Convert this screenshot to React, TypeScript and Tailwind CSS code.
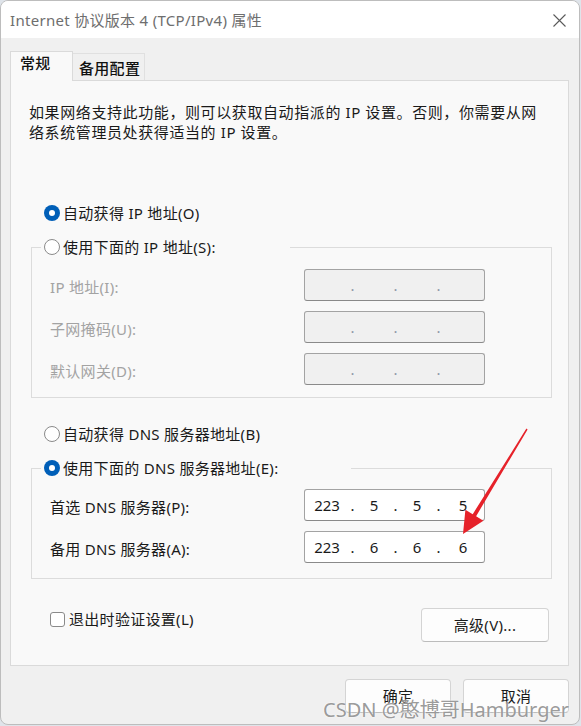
import React from "react";

const fontStack = "font-['Noto_Sans','Noto_Sans_CJK_SC',sans-serif]";

function Radio({ checked }: { checked?: boolean }) {
  if (checked) {
    return (
      <span className="flex h-[16px] w-[16px] shrink-0 items-center justify-center rounded-full bg-[#005fb8]">
        <span className="h-[6px] w-[6px] rounded-full bg-white" />
      </span>
    );
  }
  return (
    <span className="h-[16px] w-[16px] shrink-0 rounded-full border border-[#8a8a8a] bg-white" />
  );
}

function RadioRow({ label, checked }: { label: string; checked?: boolean }) {
  return (
    <div className="flex h-[20px] items-center gap-[3px] leading-[20px]">
      <Radio checked={checked} />
      <span className="whitespace-nowrap">{label}</span>
    </div>
  );
}

function IpBox({ parts, disabled }: { parts: string[]; disabled?: boolean }) {
  const dot = disabled ? "text-[#8f98a8]" : "text-[#1a1a1a]";
  return (
    <div
      className={[
        "flex h-[32px] w-[181px] items-center rounded-[3px] border border-[#a3a3a3] border-b-[#8a8a8a] text-[15px] leading-[20px] tracking-normal",
        disabled ? "bg-[#f0f0f0]" : "bg-white",
      ].join(" ")}
    >
      <span className="w-[44px] text-center">{parts[0]}</span>
      <span className={`w-[7px] text-center ${dot}`}>.</span>
      <span className="w-[36px] text-center">{parts[1]}</span>
      <span className={`w-[7px] text-center ${dot}`}>.</span>
      <span className="w-[36px] text-center">{parts[2]}</span>
      <span className={`w-[7px] text-center ${dot}`}>.</span>
      <span className="w-[42px] text-center">{parts[3]}</span>
    </div>
  );
}

function FieldRow({
  label,
  parts,
  disabled,
}: {
  label: string;
  parts: string[];
  disabled?: boolean;
}) {
  return (
    <div className="flex h-[32px] items-center">
      <span
        className={[
          "w-[254px] pt-[3px] leading-[20px]",
          disabled ? "text-[#a3a3a3]" : "text-[#1a1a1a]",
        ].join(" ")}
      >
        {label}
      </span>
      <IpBox parts={parts} disabled={disabled} />
    </div>
  );
}

function DialogButton({ label, width }: { label: string; width: string }) {
  return (
    <button
      className={`${width} flex h-[34px] items-center justify-center rounded-[4px] border border-[#d4d4d4] border-b-[#bcbcbc] bg-[#fdfdfd] text-[15px] leading-[20px] text-[#1a1a1a]`}
    >
      {label}
    </button>
  );
}

export default function App() {
  return (
    <div className={`relative h-[726px] w-[581px] overflow-hidden bg-[#dfe4ea] ${fontStack} text-[15px] tracking-[0.3px] text-[#1a1a1a]`}>
      <div className="relative flex h-[725px] w-[580px] flex-col overflow-hidden rounded-[8px] border border-[#bdbdbd] bg-[#f0f0f0]">
        {/* title bar */}
        <div className="flex h-[37px] shrink-0 items-center justify-between bg-white pl-[9px] pr-[13px]">
          <span className="whitespace-nowrap text-[15px] leading-[20px] text-[#6e6e6e]">
            Internet 协议版本 4 (TCP/IPv4) 属性
          </span>
          <svg width="13" height="13" viewBox="0 0 13 13" className="mt-[1px]">
            <path d="M0.5 0.5 L12.5 12.5 M12.5 0.5 L0.5 12.5" stroke="#5a5a5a" strokeWidth="1.1" />
          </svg>
        </div>

        <div className="pl-[9px] pr-[10px] pt-[13px]">
          {/* tabs */}
          <div className="flex h-[29px] items-end">
            <div className="relative z-10 -mb-px h-[30px] w-[63px] border border-b-0 border-[#dadada] bg-[#f9f9f9] pl-[9px] pt-[1px] font-medium leading-[20px] text-[#111]">
              常规
            </div>
            <div className="h-[27px] w-[72px] border-r border-t border-[#e0e0e0] bg-[#f0f0f0] pl-[6px] pt-[4px] font-medium leading-[20px] text-[#111]">
              备用配置
            </div>
          </div>

          {/* panel */}
          <div className="h-[586px] border border-[#dadada] bg-[#f9f9f9]">
            <p className="ml-[18px] mt-[21px] whitespace-nowrap leading-[20px] tracking-[0.6px]">
              如果网络支持此功能，则可以获取自动指派的 IP 设置。否则，你需要从网
              <br />
              络系统管理员处获得适当的 IP 设置。
            </p>

            <div className="ml-[33px] mt-[61px]">
              <RadioRow label="自动获得 IP 地址(O)" checked />
            </div>

            <fieldset className="ml-[20px] mt-[14px] w-[521px] border border-[#dcdcdc] pb-[12px] pl-[18px]">
              <legend className="-ml-[9px] w-[249px] bg-[#f9f9f9] pl-[3px]">
                <RadioRow label="使用下面的 IP 地址(S):" />
              </legend>
              <div className="flex flex-col gap-[10px] pt-[12px]">
                <FieldRow label="IP 地址(I):" parts={["", "", "", ""]} disabled />
                <FieldRow label="子网掩码(U):" parts={["", "", "", ""]} disabled />
                <FieldRow label="默认网关(D):" parts={["", "", "", ""]} disabled />
              </div>
            </fieldset>

            <div className="ml-[33px] mt-[26px]">
              <RadioRow label="自动获得 DNS 服务器地址(B)" />
            </div>

            <fieldset className="ml-[20px] mt-[14px] w-[521px] border border-[#dcdcdc] pb-[15px] pl-[18px]">
              <legend className="-ml-[9px] w-[310px] bg-[#f9f9f9] pl-[3px]">
                <RadioRow label="使用下面的 DNS 服务器地址(E):" checked />
              </legend>
              <div className="flex flex-col gap-[10px] pt-[11px]">
                <FieldRow label="首选 DNS 服务器(P):" parts={["223", "5", "5", "5"]} />
                <FieldRow label="备用 DNS 服务器(A):" parts={["223", "6", "6", "6"]} />
              </div>
            </fieldset>

            <div className="ml-[39px] mr-[19px] mt-[29px] flex h-[34px] items-start justify-between">
              <label className="mt-[1px] flex items-center gap-[4px] leading-[20px]">
                <span className="h-[15px] w-[15px] rounded-[3px] border border-[#8a8a8a] bg-white" />
                退出时验证设置(L)
              </label>
              <DialogButton label="高级(V)..." width="w-[128px]" />
            </div>
          </div>

          {/* footer */}
          <div className="mt-[13px] flex justify-end gap-[12px]">
            <DialogButton label="确定" width="w-[106px]" />
            <DialogButton label="取消" width="w-[106px]" />
          </div>
        </div>

        {/* watermark */}
        <span className="pointer-events-none absolute bottom-[2px] right-[10px] whitespace-nowrap text-[20px] leading-[24px] tracking-normal text-[#8e8e8e]/90 [text-shadow:0_0_2px_#ffffff]">
          CSDN @憨博哥Hamburger
        </span>
      </div>

      {/* red annotation arrow */}
      <svg
        className="pointer-events-none absolute left-0 top-0"
        width="581"
        height="726"
        viewBox="0 0 581 726"
      >
        <polygon
          points="527.6,429.4 476.1,516.2 483.4,520.7 463,534 465.4,509.7 472.7,514.2 526.4,428.6"
          fill="#e6222a"
        />
      </svg>
    </div>
  );
}
